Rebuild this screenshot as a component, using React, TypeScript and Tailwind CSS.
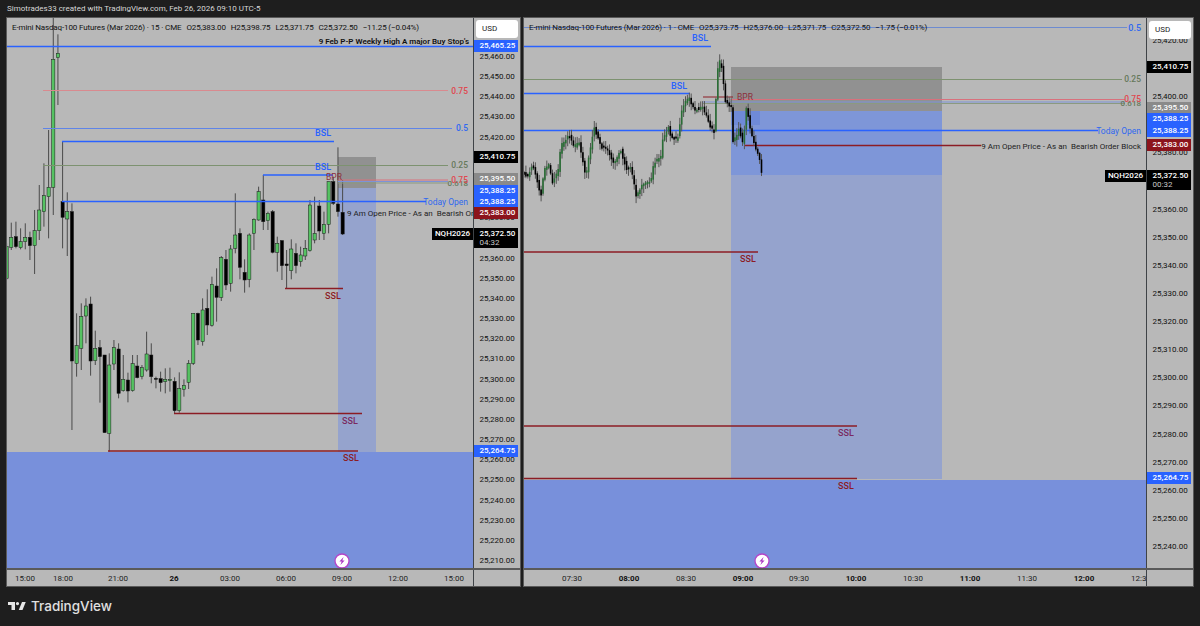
import React from 'react';

type Line = { x1: number; x2: number; y: number; c: string; w?: number };
type Label = { x: number; y: number; t: string; c: string; fs?: number; fw?: number; end?: boolean };
type Tag = { y: number; t: string; c: string };

const BLUE = '#2962ff';
const DRED = '#8c1c24';

// left chart candles: [wickTop, wickBottom, bodyTop, bodyBottom, up], read at 3x so y = 200 + v / 3
const leftBars: [number, number, number, number, number][] = [
  [130, 240, 140, 235, 1], [68, 150, 112, 142, 1], [65, 145, 110, 140, 0], [85, 148, 125, 143, 1],
  [70, 148, 112, 125, 1], [95, 180, 112, 137, 0], [30, 222, 92, 137, 1], [-45, 120, 30, 92, 1],
  [-110, 80, -13, 35, 1], [-210, 115, -38, -10, 1], [-560, 45, -422, -38, 1], [-497, -285, -440, -427, 1],
  [-175, 145, 5, 52, 0], [-23, 168, 35, 57, 1], [10, 690, 35, 483, 0], [340, 530, 437, 490, 1],
  [310, 510, 350, 445, 1], [295, 430, 318, 348, 1], [290, 527, 312, 483, 0], [392, 495, 445, 482, 1],
  [420, 608, 443, 470, 0], [465, 698, 465, 698, 0], [460, 755, 495, 700, 1], [420, 510, 443, 492, 1],
  [430, 595, 447, 580, 0], [465, 575, 538, 572, 1], [518, 607, 540, 573, 0], [465, 575, 491, 572, 1],
  [465, 535, 498, 533, 0], [495, 538, 503, 530, 1], [395, 515, 462, 510, 1], [430, 550, 465, 530, 0],
  [530, 565, 535, 537, 0], [515, 575, 536, 548, 0], [505, 580, 538, 545, 1], [503, 575, 538, 542, 1],
  [532, 640, 544, 632, 0], [517, 638, 566, 632, 1], [538, 590, 556, 568, 1], [480, 567, 490, 547, 1],
  [340, 495, 340, 490, 1], [338, 435, 340, 420, 0], [295, 437, 330, 425, 1], [268, 405, 325, 375, 0],
  [230, 380, 253, 376, 1], [205, 365, 258, 292, 0], [168, 303, 173, 292, 1], [150, 270, 178, 255, 0],
  [135, 275, 147, 250, 1], [-20, 160, 105, 145, 1], [85, 238, 100, 202, 0], [178, 278, 217, 240, 0],
  [100, 262, 105, 238, 1], [55, 150, 58, 100, 1], [-40, 62, -25, 60, 1], [-75, 90, 0, 65, 0],
  [35, 90, 40, 62, 1], [30, 160, 35, 157, 0], [110, 215, 130, 157, 1], [120, 240, 122, 197, 0],
  [150, 265, 192, 197, 0], [118, 238, 147, 212, 1], [130, 220, 160, 197, 0], [140, 200, 165, 185, 1],
  [120, 180, 145, 168, 1], [0, 155, 15, 152, 1], [-10, 130, 100, 120, 1], [0, 120, 18, 93, 0],
  [35, 120, 73, 100, 1], [-55, 100, -55, 73, 1], [-70, 15, -55, 10, 0], [-158, 50, 12, 35, 0],
  [-60, 105, 37, 102, 0],
];

// right chart price path, 1 minute bars are generated along it
const rightPath: [number, number][] = [
  [12, 520], [25, 530], [40, 495], [50, 520], [65, 590], [75, 510], [90, 495], [100, 545], [118, 510], [125, 440],
  [150, 405], [165, 440], [180, 430], [200, 530], [225, 380], [245, 440], [265, 450], [285, 490], [305, 450],
  [325, 515], [335, 500], [352, 590], [370, 550], [395, 545], [405, 490], [425, 470], [430, 420], [450, 375],
  [455, 410], [475, 420], [490, 320], [510, 290], [525, 330], [550, 320], [575, 380], [585, 395], [595, 215],
  [605, 175], [612, 240], [620, 310], [638, 320], [642, 430], [660, 385], [672, 435], [682, 320], [695, 395],
  [710, 450], [720, 460], [725, 520],
];

const pathAt = (x: number) => {
  for (let i = 1; i < rightPath.length; i++) {
    const [ax, ay] = rightPath[i - 1];
    const [bx, by] = rightPath[i];
    if (x <= bx) return (ay + ((x - ax) / (bx - ax)) * (by - ay)) / 3;
  }
  return rightPath[rightPath.length - 1][1] / 3;
};

const noise = (n: number) => Math.abs(Math.sin(n * 12.9898) * 43758.5453) % 1;

function LeftCandles() {
  return (
    <g>
      {leftBars.map(([wt, wb, bt, bb, up], i) => {
        const x = 6.6 + i * 4.667;
        const y = (v: number) => 200 + v / 3;
        return (
          <g key={i}>
            <line x1={x} x2={x} y1={y(wt)} y2={y(wb)} stroke="#4a4a4a" strokeWidth={1} />
            <rect x={x - 1.6} y={y(bt)} width={3.2} height={Math.max(y(bb) - y(bt), 1)} fill={up ? '#55c262' : '#000'} stroke="#1a1a1a" strokeWidth={0.5} />
          </g>
        );
      })}
    </g>
  );
}

function RightCandles() {
  const bars = [];
  for (let i = 0; i < 126; i++) {
    const x = 524 + i * 1.9;
    const zx = (x - 520) * 3;
    const open = pathAt(zx - 2.9) + (noise(i + 9) - 0.5) * 3;
    const close = pathAt(zx + 2.9) + (noise(i + 21) - 0.5) * 3;
    const top = Math.min(open, close);
    const bot = Math.max(open, close);
    const up = close <= open;
    bars.push(
      <g key={i}>
        <line x1={x} x2={x} y1={top - 1.5 - noise(i) * 6} y2={bot + 1.5 + noise(i + 50) * 6} stroke="#555" strokeWidth={1} />
        <rect x={x - 0.8} y={top - 0.5} width={1.6} height={Math.max(bot - top, 1) + 1} fill={up ? '#2a6e36' : '#000'} />
      </g>
    );
  }
  return <g>{bars}</g>;
}

function Bolt({ x, y }: { x: number; y: number }) {
  return (
    <g>
      <circle cx={x} cy={y} r={7} fill="#fff" stroke="#b544c8" strokeWidth={1.3} />
      <path d={`M${x + 1.6} ${y - 4} L${x - 2.6} ${y + 0.6} L${x - 0.3} ${y + 0.6} L${x - 1.6} ${y + 4} L${x + 2.6} ${y - 0.6} L${x + 0.3} ${y - 0.6} Z`} fill="#a933c0" />
    </g>
  );
}

function Drawing({ lines, labels }: { lines: Line[]; labels: Label[] }) {
  return (
    <>
      {lines.map((l, i) => (
        <line key={i} x1={l.x1} x2={l.x2} y1={l.y} y2={l.y} stroke={l.c} strokeWidth={l.w ?? 1} />
      ))}
      {labels.map((l, i) => (
        <text
          key={i}
          x={l.x}
          y={l.y + 3}
          fill={l.c}
          fontSize={l.fs ?? 8}
          fontWeight={l.fw ?? 400}
          textAnchor={l.end ? 'end' : 'start'}
          className="whitespace-pre"
        >
          {l.t}
        </text>
      ))}
    </>
  );
}

function PriceAxis({ ticks, tags, usdTop, last, lastTime }: { ticks: [string, number][]; tags: Tag[]; usdTop: number; last: number; lastTime: string }) {
  return (
    <div className="relative w-[47px] shrink-0 overflow-hidden border-l border-[#3f4347] bg-[#b8b8b8]">
      {ticks.map(([t, y]) => (
        <span key={t} className="absolute left-[5.5px] text-[8px] leading-[12px] text-[#111]" style={{ top: y - 18 - 6 }}>
          {t}
        </span>
      ))}
      <div className="absolute left-[2px] w-[42px] rounded-[3px] bg-white pl-[6px] text-[8px] leading-[18px] text-[#222]" style={{ top: usdTop }}>
        USD
      </div>
      {tags.map((tag, i) => (
        <span
          key={i}
          className="absolute left-0 w-[44px] pl-[5.5px] text-[8px] font-medium leading-[12px] text-white"
          style={{ top: tag.y - 18 - 6, backgroundColor: tag.c }}
        >
          {tag.t}
        </span>
      ))}
      <div className="absolute left-0 w-[44px] bg-black py-[1px] pl-[5.5px] text-[8px] leading-[9px] text-white" style={{ top: last - 18 }}>
        <div className="font-medium">25,372.50</div>
        <div className="text-[#c8c8c8]">{lastTime}</div>
      </div>
    </div>
  );
}

function TimeAxis({ labels, origin }: { labels: [string, number, boolean][]; origin: number }) {
  return (
    <div className="flex h-[18px] shrink-0 border-t-2 border-[#5a5a5a] bg-[#b8b8b8]">
      <div className="relative flex-1 overflow-hidden">
        {labels.map(([t, x, bold]) => (
          <span
            key={t + x}
            className={`absolute top-[3px] -translate-x-1/2 text-[8px] leading-[11px] ${bold ? 'font-bold text-[#111]' : 'text-[#222]'}`}
            style={{ left: x - origin }}
          >
            {t}
          </span>
        ))}
      </div>
      <div className="w-[47px] shrink-0 border-l border-[#3f4347]" />
    </div>
  );
}

const leftY = (p: number) => 57 + (25460 - p) * 2.016;
const rightY = (p: number) => 97 + (25400 - p) * 2.8125;
const fmt = (p: number) => `25,${p}.00`;

const leftTicks = [460, 450, 440, 430, 420, 380, 360, 350, 340, 330, 320, 310, 300, 290, 280, 270, 260, 250, 240, 230, 220, 210]
  .map((p): [string, number] => [fmt(p), leftY(25000 + p)]);
const rightTicks = [420, 400, 380, 360, 350, 340, 330, 320, 310, 300, 290, 280, 270, 260, 250, 240]
  .map((p): [string, number] => [fmt(p), rightY(25000 + p)]);

const leftLines: Line[] = [
  { x1: 7, x2: 473, y: 46.5, c: BLUE, w: 1.4 },
  { x1: 43, x2: 448, y: 90.5, c: '#d98a8f' },
  { x1: 43, x2: 452, y: 128.5, c: '#5f84e8' },
  { x1: 43, x2: 448, y: 165.5, c: '#7d9270' },
  { x1: 338, x2: 448, y: 180, c: '#d9707c' },
  { x1: 338, x2: 448, y: 181.5, c: '#7c93d8' },
  { x1: 338, x2: 448, y: 183, c: '#8b9a7f' },
  { x1: 62, x2: 334, y: 141.5, c: BLUE, w: 1.4 },
  { x1: 263, x2: 333, y: 175, c: BLUE, w: 1.4 },
  { x1: 62, x2: 426, y: 201.5, c: BLUE, w: 1.4 },
  { x1: 285, x2: 343, y: 288.5, c: DRED, w: 1.4 },
  { x1: 174, x2: 362, y: 413.5, c: DRED, w: 1.4 },
  { x1: 108, x2: 358, y: 451, c: DRED, w: 1.4 },
];
const leftLabels: Label[] = [
  { x: 469, y: 41, t: "9 Feb P-P Weekly High A major Buy Stop's", c: '#111', fs: 8, fw: 600, end: true },
  { x: 468, y: 90.5, t: '0.75', c: '#e0474f', fs: 8.5, fw: 500, end: true },
  { x: 468, y: 128, t: '0.5', c: '#2f68f0', fs: 8.5, fw: 500, end: true },
  { x: 468, y: 165, t: '0.25', c: '#66795c', fs: 8.5, fw: 500, end: true },
  { x: 468, y: 183, t: '0.618', c: '#66795c', fs: 8, fw: 500, end: true },
  { x: 468, y: 180, t: '0.75', c: '#e0474f', fs: 8.5, fw: 500, end: true },
  { x: 315, y: 133, t: 'BSL', c: BLUE, fs: 9, fw: 500 },
  { x: 315, y: 167, t: 'BSL', c: BLUE, fs: 9, fw: 500 },
  { x: 326, y: 177, t: 'BPR', c: '#8c2f3a', fs: 8.5 },
  { x: 468, y: 201.5, t: 'Today Open', c: '#2f68f0', fs: 8.5, end: true },
  { x: 347, y: 212.5, t: '9 Am Open Price - As an  Bearish Order Block', c: '#222' },
  { x: 325, y: 296, t: 'SSL', c: DRED, fs: 9, fw: 500 },
  { x: 342, y: 421, t: 'SSL', c: '#7a2a60', fs: 9, fw: 500 },
  { x: 343, y: 458, t: 'SSL', c: DRED, fs: 9, fw: 500 },
];

const rightLines: Line[] = [
  { x1: 524, x2: 1127, y: 27.5, c: '#6d8bd0' },
  { x1: 524, x2: 711, y: 46.5, c: BLUE, w: 1.4 },
  { x1: 524, x2: 1122, y: 79.5, c: '#7d9270' },
  { x1: 524, x2: 690, y: 93.5, c: BLUE, w: 1.4 },
  { x1: 703, x2: 733, y: 97, c: DRED, w: 1 },
  { x1: 731, x2: 1125, y: 99.5, c: '#d9707c' },
  { x1: 703, x2: 1125, y: 102, c: '#7c93d8' },
  { x1: 703, x2: 1125, y: 103.5, c: '#8b9a7f' },
  { x1: 524, x2: 1098, y: 130.5, c: BLUE, w: 1.4 },
  { x1: 745, x2: 981, y: 145.5, c: DRED, w: 1.4 },
  { x1: 524, x2: 758, y: 252, c: DRED, w: 1.4 },
  { x1: 524, x2: 857, y: 426, c: DRED, w: 1.4 },
  { x1: 524, x2: 857, y: 478.5, c: DRED, w: 1.4 },
];
const rightLabels: Label[] = [
  { x: 1141, y: 27.5, t: '0.5', c: '#2f68f0', fs: 9, fw: 500, end: true },
  { x: 692, y: 38, t: 'BSL', c: BLUE, fs: 9, fw: 500 },
  { x: 671, y: 86, t: 'BSL', c: BLUE, fs: 9, fw: 500 },
  { x: 1141, y: 79, t: '0.25', c: '#66795c', fs: 8.5, fw: 500, end: true },
  { x: 1141, y: 103, t: '0.618', c: '#66795c', fs: 8, fw: 500, end: true },
  { x: 1141, y: 99, t: '0.75', c: '#e0474f', fs: 8.5, fw: 500, end: true },
  { x: 737, y: 97, t: 'BPR', c: '#8c2f3a', fs: 8.5 },
  { x: 1141, y: 130.5, t: 'Today Open', c: '#2f68f0', fs: 8.5, end: true },
  { x: 1141, y: 145.5, t: '9 Am Open Price - As an  Bearish Order Block', c: '#222', end: true },
  { x: 740, y: 259, t: 'SSL', c: DRED, fs: 9, fw: 500 },
  { x: 838, y: 433, t: 'SSL', c: '#7a2a60', fs: 9, fw: 500 },
  { x: 838, y: 486, t: 'SSL', c: DRED, fs: 9, fw: 500 },
];

const leftTimes: [string, number, boolean][] = [
  ['15:00', 25, false], ['18:00', 63, false], ['21:00', 118, false], ['26', 174, true], ['03:00', 230, false],
  ['06:00', 286, false], ['09:00', 342, false], ['12:00', 398, false], ['15:00', 454, false],
];
const rightTimes: [string, number, boolean][] = [
  ['07:30', 572, false], ['08:00', 629, true], ['08:30', 686, false], ['09:00', 743, true], ['09:30', 799, false],
  ['10:00', 856, true], ['10:30', 913, false], ['11:00', 970, true], ['11:30', 1027, false], ['12:00', 1084, true],
  ['12:30', 1141, false],
];

function Legend({ interval, ohlc }: { interval: string; ohlc: string[] }) {
  return (
    <div className="absolute left-[5px] top-[4px] flex gap-[5px] whitespace-pre text-[8px] leading-[11px] tracking-[-0.13px] text-[#111]">
      <span>E-mini Nasdaq-100 Futures (Mar 2026) · {interval} · CME</span>
      {ohlc.map((v) => (
        <span key={v}>{v}</span>
      ))}
    </div>
  );
}

export default function App() {
  return (
    <div className="flex h-[626px] w-[1200px] flex-col overflow-hidden bg-[#1e1e1e] font-['Roboto',sans-serif]">
      <div className="h-[17px] shrink-0 pl-[7px] pt-[3px] text-[8px] leading-[12px] text-[#d8d8d8]">
        Simotrades33 created with TradingView.com, Feb 26, 2026 09:10 UTC-5
      </div>

      <div className="flex h-[570px] shrink-0 gap-[2px] pl-[6px]">
        {/* 15 minute pane */}
        <div className="flex w-[515px] flex-col border border-[#5a5a5a]">
          <div className="flex min-h-0 flex-1">
            <div className="relative flex-1 overflow-hidden bg-[#b8b8b8]">
              <svg className="absolute inset-0 h-full w-full" viewBox="7 18 466 550">
                <rect x={7} y={452} width={466} height={116} fill="#7890db" />
                <rect x={338} y={188} width={38} height={264} fill="#95a3cd" />
                <rect x={338} y={157} width={38} height={31} fill="#919191" />
                <LeftCandles />
                <Drawing lines={leftLines} labels={leftLabels} />
                <Bolt x={342} y={561} />
              </svg>
              <Legend interval="15" ohlc={['O25,383.00', 'H25,398.75', 'L25,371.75', 'C25,372.50', '−11.25 (−0.04%)']} />
              <div className="absolute right-0 top-[210px] bg-black pl-[3px] pr-[3px] text-[8px] font-medium leading-[12px] text-white">NQH2026</div>
            </div>
            <PriceAxis
              ticks={leftTicks}
              usdTop={2}
              last={228}
              lastTime="04:32"
              tags={[
                { y: 46, t: '25,465.25', c: BLUE },
                { y: 157, t: '25,410.75', c: '#000' },
                { y: 179, t: '25,395.50', c: '#8a8a8a' },
                { y: 190.5, t: '25,388.25', c: BLUE },
                { y: 201.5, t: '25,388.25', c: BLUE },
                { y: 212.5, t: '25,383.00', c: '#8c141c' },
                { y: 451, t: '25,264.75', c: BLUE },
              ]}
            />
          </div>
          <TimeAxis labels={leftTimes} origin={7} />
        </div>

        {/* 1 minute pane */}
        <div className="flex w-[671px] flex-col border border-[#5a5a5a]">
          <div className="flex min-h-0 flex-1">
            <div className="relative flex-1 overflow-hidden bg-[#b8b8b8]">
              <svg className="absolute inset-0 h-full w-full" viewBox="524 18 622 550">
                <rect x={524} y={480} width={622} height={88} fill="#7890db" />
                <rect x={731} y={175} width={211} height={304} fill="#95a3cd" />
                <rect x={731} y={111} width={211} height={64} fill="#7e96d8" />
                <rect x={731} y={111} width={29} height={14} fill="#6f8ad8" />
                <rect x={731} y={67} width={211} height={44} fill="#919191" />
                <Drawing lines={rightLines} labels={rightLabels} />
                <RightCandles />
                <Bolt x={762} y={561} />
              </svg>
              <Legend interval="1" ohlc={['O25,373.75', 'H25,376.00', 'L25,371.75', 'C25,372.50', '−1.75 (−0.01%)']} />
              <div className="absolute right-0 top-[152px] bg-black pl-[3px] pr-[3px] text-[8px] font-medium leading-[12px] text-white">NQH2026</div>
            </div>
            <PriceAxis
              ticks={rightTicks}
              usdTop={3}
              last={170}
              lastTime="00:32"
              tags={[
                { y: 67, t: '25,410.75', c: '#000' },
                { y: 108, t: '25,395.50', c: '#8a8a8a' },
                { y: 119, t: '25,388.25', c: BLUE },
                { y: 130.5, t: '25,388.25', c: BLUE },
                { y: 145, t: '25,383.00', c: '#8c141c' },
                { y: 478, t: '25,264.75', c: BLUE },
              ]}
            />
          </div>
          <TimeAxis labels={rightTimes} origin={524} />
        </div>
      </div>

      <div className="flex items-center gap-[5px] pl-[8px] pt-[10px]">
        <svg viewBox="0 0 36 28" className="h-[14px] w-[18px]" fill="#e6e6e6">
          <path d="M14 6H0v6h7v10h7V6zm15 16h-7.5L28 6h7.5L29 22zM19 6a3.2 3.2 0 1 0 0 6.4A3.2 3.2 0 0 0 19 6z" />
        </svg>
        <span className="font-['Inter',sans-serif] text-[13.5px] font-medium leading-[18px] text-[#e0e0e0]">TradingView</span>
      </div>
    </div>
  );
}
